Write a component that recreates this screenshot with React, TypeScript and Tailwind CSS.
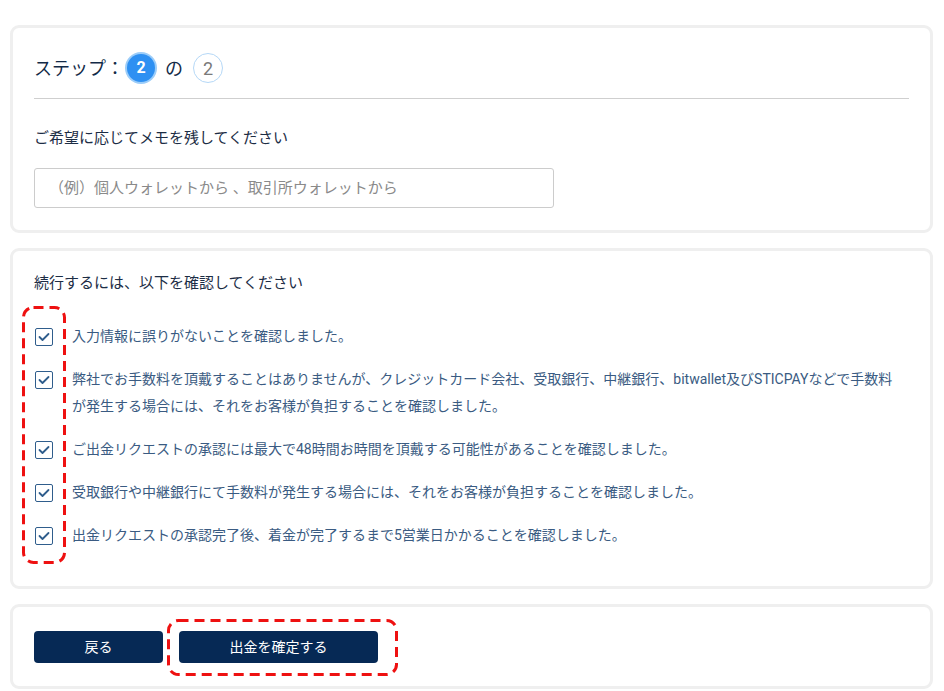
import { useState } from "react";

const confirmations = [
  "入力情報に誤りがないことを確認しました。",
  "弊社でお手数料を頂戴することはありませんが、クレジットカード会社、受取銀行、中継銀行、bitwallet及びSTICPAYなどで手数料が発生する場合には、それをお客様が負担することを確認しました。",
  "ご出金リクエストの承認には最大で48時間お時間を頂戴する可能性があることを確認しました。",
  "受取銀行や中継銀行にて手数料が発生する場合には、それをお客様が負担することを確認しました。",
  "出金リクエストの承認完了後、着金が完了するまで5営業日かかることを確認しました。",
];

function Card({ children, className = "" }: { children: React.ReactNode; className?: string }) {
  return (
    <div className={`relative bg-white border-[3px] border-[#efefef] rounded-[9px] ${className}`}>
      {children}
    </div>
  );
}

// red dashed highlight drawn over content
function DashedMark({ w, h, className }: { w: number; h: number; className: string }) {
  return (
    <svg width={w} height={h} className={`absolute pointer-events-none ${className}`}>
      <rect
        x="1.5"
        y="1.5"
        width={w - 3}
        height={h - 3}
        rx="10"
        fill="none"
        stroke="#ee1111"
        strokeWidth="3"
        strokeDasharray="10 6"
      />
    </svg>
  );
}

function CheckBox({ checked, onChange }: { checked: boolean; onChange: () => void }) {
  return (
    <button
      type="button"
      onClick={onChange}
      className="w-[18px] h-[18px] shrink-0 border-[1.5px] border-[#2f5d8c] rounded-[2px] flex items-center justify-center bg-white mt-[4.5px]"
    >
      {checked && (
        <svg width="12" height="10" viewBox="0 0 12 10" fill="none">
          <path d="M1.5 5 L4.5 8 L10.5 2" stroke="#2f5d8c" strokeWidth="1.8" strokeLinecap="round" strokeLinejoin="round" />
        </svg>
      )}
    </button>
  );
}

export default function App() {
  const [checked, setChecked] = useState<boolean[]>(confirmations.map(() => true));
  const [memo, setMemo] = useState("");

  const toggle = (i: number) => {
    setChecked(prev => prev.map((c, idx) => (idx === i ? !c : c)));
  };

  return (
    <div
      className="w-[944px] h-[691px] overflow-hidden bg-white pt-[25px] px-[10px] flex flex-col gap-[15px]"
      style={{ fontFamily: 'Roboto, "Noto Sans CJK JP", sans-serif' }}
    >
      <Card className="w-[923px] px-[21px] pt-[26px] pb-[22px] shrink-0">
        <div className="flex items-center h-[28px] text-[18px] text-[#132a47]">
          <span>ステップ：</span>
          <span className="ml-[3px] w-[28px] h-[28px] rounded-full bg-[#2e90f2] ring-2 ring-[#9ccdf9] flex items-center justify-center text-white text-[16px] font-bold">
            2
          </span>
          <span className="ml-[10px] text-[18px]">の</span>
          <span className="ml-[10px] w-[30px] h-[30px] rounded-full border border-[#b5d8f7] flex items-center justify-center text-[#7a7a7a] text-[18px]">
            2
          </span>
        </div>
        <div className="mt-[16px] h-px bg-[#cfcfcf]" />
        <p className="mt-[28px] text-[15px] leading-[22px] text-[#1c2d45]">ご希望に応じてメモを残してください</p>
        <input
          value={memo}
          onChange={e => setMemo(e.target.value)}
          placeholder="（例）個人ウォレットから 、取引所ウォレットから"
          className="mt-[19px] w-[520px] h-[40px] border border-[#cccccc] rounded-[3px] px-[14px] text-[15px] text-[#333] placeholder:text-[#8a8a8a] outline-none"
        />
      </Card>

      <Card className="w-[923px] px-[21px] pt-[21px] pb-[37px] shrink-0">
        <p className="text-[15px] leading-[22px] text-[#1c2d45]">続行するには、以下を確認してください</p>
        <div className="mt-[29px] flex flex-col gap-[16px]">
          {confirmations.map((text, i) => (
            <div key={i} className="flex items-start gap-[19px] pl-[1px]">
              <CheckBox checked={checked[i]} onChange={() => toggle(i)} />
              <p className="text-[14px] leading-[27px] text-[#3a5b82] pr-[8px]">{text}</p>
            </div>
          ))}
        </div>
        <DashedMark w={44} h={258} className="left-[9px] top-[55px]" />
      </Card>

      <Card className="w-[923px] px-[21px] pt-[24px] pb-[23px] shrink-0">
        <div className="flex gap-[16px]">
          <button className="w-[129px] h-[32px] rounded-[4px] bg-[#062955] text-white text-[14px]">戻る</button>
          <button className="w-[199px] h-[32px] rounded-[4px] bg-[#062955] text-white text-[14px]">出金を確定する</button>
        </div>
        <DashedMark w={231} h={57} className="left-[154px] top-[12px]" />
      </Card>
    </div>
  );
}
